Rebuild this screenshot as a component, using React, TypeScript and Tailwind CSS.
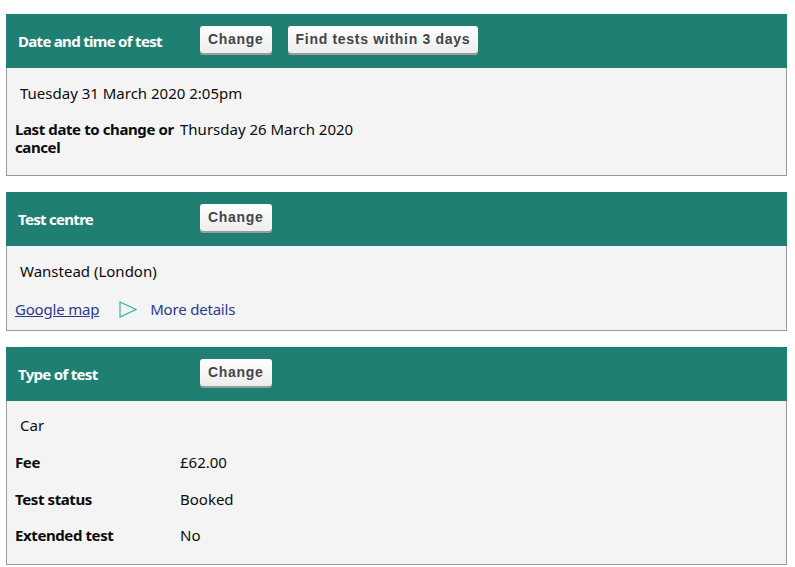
import React from 'react';

// Booking summary panels

const body = { fontFamily: '"Noto Sans", Arial, sans-serif' };

const HeaderButton: React.FC<{ label: string }> = ({ label }) => (
  <button
    className="h-[27px] px-[8px] rounded-[3px] bg-gradient-to-b from-white to-[#ededed] text-[14px] font-bold tracking-[0.7px] text-[#454545] shadow-[0_2px_0_#9a9a9a]"
    style={{ fontFamily: '"Liberation Sans", Arial, sans-serif' }}
  >
    {label}
  </button>
);

const Panel: React.FC<{ title: string; buttons: string[]; children: React.ReactNode; bodyClass?: string }> = ({
  title,
  buttons,
  children,
  bodyClass = 'pt-4 pb-[19px]',
}) => (
  <div className="mb-4">
    <div className="flex items-center h-[54px] bg-[#1f7f72] pl-3">
      <div className="w-[182px] text-white font-bold text-[15px] tracking-[-0.7px]">{title}</div>
      <div className="flex gap-4 -mt-1">
        {buttons.map((b) => (
          <HeaderButton key={b} label={b} />
        ))}
      </div>
    </div>
    <div className={`border border-t-0 border-[#999] bg-[#f4f4f4] pl-2 ${bodyClass}`}>{children}</div>
  </div>
);

const Row: React.FC<{ label: string; value: string; gap?: string }> = ({ label, value, gap = 'mt-[18px]' }) => (
  <div className={`flex ${gap}`}>
    <div className="w-[165px] font-bold tracking-[-0.4px]">{label}</div>
    <div>{value}</div>
  </div>
);

const App: React.FC = () => {
  return (
    <div className="bg-white min-h-screen pl-[6px] pr-2 pt-[14px] text-[15px] leading-[18px] text-[#0b0c0c]" style={body}>
      <Panel title="Date and time of test" buttons={['Change', 'Find tests within 3 days']}>
        <div className="pl-[5px]">Tuesday 31 March 2020 2:05pm</div>
        <Row label="Last date to change or cancel" value="Thursday 26 March 2020" />
      </Panel>

      <Panel title="Test centre" buttons={['Change']} bodyClass="pt-4 pb-3">
        <div className="pl-[5px]">Wanstead (London)</div>
        <div className="flex items-center mt-5 tracking-[-0.2px]">
          <a href="#" className="underline text-[#2b3a8f]">
            Google map
          </a>
          <svg width="18" height="17" viewBox="0 0 18 17" className="ml-[20px] mr-[13px]">
            <path d="M1 1 L17 8.5 L1 16 Z" fill="none" stroke="#2fb5a0" strokeWidth="1.2" />
          </svg>
          <a href="#" className="text-[#2b3a8f]">
            More details
          </a>
        </div>
      </Panel>

      <Panel title="Type of test" buttons={['Change']} bodyClass="pt-[15px] pb-5">
        <div className="pl-[5px]">Car</div>
        <Row label="Fee" value="£62.00" gap="mt-[19px]" />
        <Row label="Test status" value="Booked" gap="mt-[19px]" />
        <Row label="Extended test" value="No" />
      </Panel>
    </div>
  );
};

export default App;
